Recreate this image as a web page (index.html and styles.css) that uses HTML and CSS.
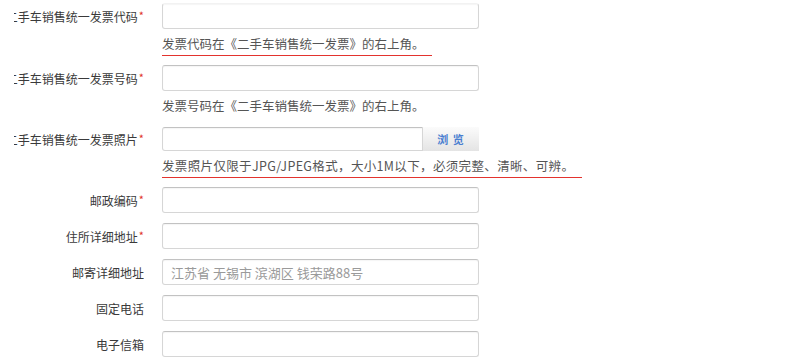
FILE: index.html
```html
<!DOCTYPE html>
<html lang="zh-CN">
<head>
<meta charset="utf-8">
<title>二手车销售统一发票</title>
<link rel="stylesheet" href="styles.css">
</head>
<body>
<div class="form">
  <div class="row row-hint">
    <label class="lbl"><span>二手车销售统一发票代码<em>*</em></span></label>
    <div class="field">
      <input class="ctl ctl-first" type="text">
      <div class="hint"><span>发票代码在《二手车销售统一发票》的右上角。</span></div>
    </div>
  </div>
  <div class="row row-hint">
    <label class="lbl"><span>二手车销售统一发票号码<em>*</em></span></label>
    <div class="field">
      <input class="ctl" type="text">
      <div class="hint"><span class="plain">发票号码在《二手车销售统一发票》的右上角。</span></div>
    </div>
  </div>
  <div class="row row-hint row-file">
    <label class="lbl"><span>二手车销售统一发票照片<em>*</em></span></label>
    <div class="field">
      <div class="file">
        <input class="ctl ctl-file" type="text">
        <button class="browse" type="button">浏 览</button>
      </div>
      <div class="hint"><span class="wide">发票照片仅限于JPG/JPEG格式，大小1M以下，必须完整、清晰、可辨。</span></div>
    </div>
  </div>
  <div class="row">
    <label class="lbl"><span>邮政编码<em>*</em></span></label>
    <div class="field"><input class="ctl" type="text"></div>
  </div>
  <div class="row">
    <label class="lbl"><span>住所详细地址<em>*</em></span></label>
    <div class="field"><input class="ctl" type="text"></div>
  </div>
  <div class="row">
    <label class="lbl"><span>邮寄详细地址</span></label>
    <div class="field"><input class="ctl" type="text" placeholder="江苏省 无锡市 滨湖区 钱荣路88号"></div>
  </div>
  <div class="row">
    <label class="lbl"><span>固定电话</span></label>
    <div class="field"><input class="ctl" type="text"></div>
  </div>
  <div class="row">
    <label class="lbl"><span>电子信箱</span></label>
    <div class="field"><input class="ctl" type="text"></div>
  </div>
</div>
</body>
</html>
```
FILE: styles.css
```css
html, body {
  margin: 0;
  padding: 0;
  background: #ffffff;
}
body {
  font-family: "Noto Sans CJK SC", "Noto Sans", "Liberation Sans", sans-serif;
  color: #333333;
  font-size: 12px;
}
.form {
  padding-top: 3px;
}
.row {
  display: flex;
  align-items: flex-start;
  margin-bottom: 10px;
}
.lbl {
  width: 130px;
  margin-left: 14px;
  margin-right: 18px;
  height: 26px;
  display: flex;
  justify-content: flex-end;
  align-items: center;
  overflow: hidden;
  white-space: nowrap;
  font-size: 12px;
  color: #3a3a3a;
  flex-shrink: 0;
}
.lbl span {
  flex-shrink: 0;
}
.lbl em {
  font-style: normal;
  color: #e0302a;
  font-size: 11px;
  margin-left: 1px;
  position: relative;
  top: -2px;
}
.row-file .lbl {
  height: 24px;
}
.field {
  width: 317px;
}
.ctl {
  display: block;
  box-sizing: border-box;
  width: 317px;
  height: 26px;
  margin: 0;
  padding: 0 8px;
  border: 1px solid #d6d6d6;
  border-top-color: #c2c2c2;
  border-radius: 3px;
  box-shadow: inset 0 1px 1px rgba(0, 0, 0, 0.04);
  background: #ffffff;
  font-family: "Noto Sans CJK SC", "Noto Sans", sans-serif;
  font-size: 13px;
  color: #555555;
  outline: none;
}
.ctl-first {
  border-top-color: #f2f2f2;
}
.ctl::placeholder {
  color: #9a9a9a;
}
.file {
  display: flex;
  height: 24px;
}
.ctl-file {
  width: 262px;
  height: 24px;
  border-radius: 3px 0 0 3px;
}
.browse {
  width: 56px;
  height: 24px;
  margin: 0;
  padding: 0;
  border: none;
  background: linear-gradient(#fbfbfb, #e4e4e4);
  color: #4a7fd0;
  font-family: "Noto Sans CJK SC", sans-serif;
  font-size: 11px;
  font-weight: bold;
  letter-spacing: 1px;
}
.hint {
  height: 26px;
  font-size: 12.5px;
  color: #555555;
  white-space: nowrap;
}
.hint span {
  display: block;
  width: fit-content;
  box-sizing: content-box;
  height: 23px;
  padding-top: 3px;
  line-height: 23px;
  padding-right: 7px;
  border-bottom: 1px solid #e3332e;
}
.hint span.plain {
  border-bottom-color: transparent;
}
.hint span.wide {
  letter-spacing: 0.35px;
  padding-right: 8px;
}
```
